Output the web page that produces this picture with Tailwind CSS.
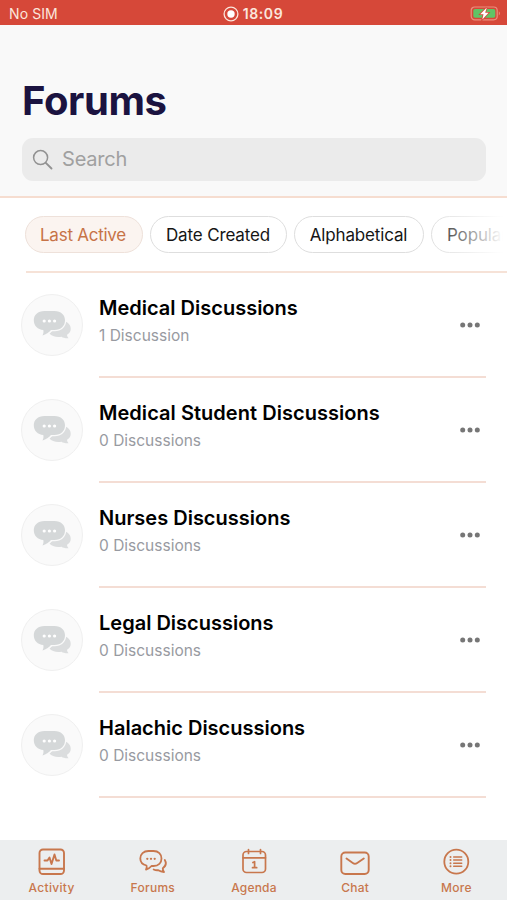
<!DOCTYPE html>
<html lang="en">
<head>
<meta charset="utf-8">
<title>Forums</title>
<script src="https://cdn.jsdelivr.net/npm/@tailwindcss/browser@4"></script>
</head>
<body class="w-[507px] h-[900px] overflow-hidden bg-white font-['Inter','Liberation_Sans',sans-serif] flex flex-col">
<svg class="hidden">
  <symbol id="bubbles" viewBox="0 0 38 30">
    <path d="M31 11C36 12.500 38.500 16 37.500 20.500C37 22.500 35.500 24 34 24.800C34 26 34.500 27 35.500 28.200C32 28.300 30 27.700 28.500 26.700C24 27.500 18.500 26.500 16.500 23.500Z" fill="#dbddde"/>
    <path d="M11.500 1H21.500C28 1 32 5 32 10.300C32 16 28 20 21.500 20H18C16 22.500 13 24.500 9.500 25.500C10.500 23.500 10.700 22 10.300 20C4.800 19.500 .8 16 .8 10.300C.8 5 4.800 1 11.500 1Z" fill="#d5d8d9" stroke="#fafafa" stroke-width="2.400" paint-order="stroke"/>
    <path d="M11.200 11h.01M16.400 11h.01M21.600 11h.01" stroke="#fff" stroke-width="3.200" stroke-linecap="round"/>
  </symbol>
  <symbol id="dots" viewBox="0 0 20 6"><circle cx="2.700" cy="3" r="2.500"/><circle cx="10" cy="3" r="2.500"/><circle cx="17.300" cy="3" r="2.500"/></symbol>
</svg>

<div class="h-[25px] shrink-0 bg-[#d64839] text-[#fbe6dc] grid grid-cols-3 items-center pt-[2px]">
  <span class="pl-[9px] text-[14px] leading-none tracking-[0.1px]">No SIM</span>
  <span class="flex items-center justify-center gap-[4px] text-[14px] font-semibold leading-none tracking-[0.600px] -ml-[1px]">
    <svg class="size-[16px]" viewBox="0 0 16 16"><circle cx="8" cy="8" r="6.900" fill="none" stroke="currentColor" stroke-width="1.300"/><circle cx="8" cy="8" r="3.700" fill="#fff"/></svg>18:09</span>
  <svg class="w-[31px] h-[15px] justify-self-end mr-[6px]" viewBox="0 0 31 15"><rect x="1.200" y="1" width="26" height="12.800" rx="3.500" fill="none" stroke="#e98f7f" stroke-width="1.200"/><rect x="3.300" y="3" width="22" height="8.800" rx="1.800" fill="#5fc466"/><path d="M28.800 5.300Q31 7.400 28.800 9.500" fill="#e98f7f"/><path d="M16.800 1.500L10.200 8.300H13.500L12.300 13.500L18.600 6.700H15.200Z" fill="#fff" stroke="#d64839" stroke-width="1.600" paint-order="stroke"/></svg>
</div>

<header class="h-[173px] shrink-0 bg-[#f9f9f9] border-b-2 border-[#f6ddd0] pl-[22px] pr-[21px] pt-[54px]">
  <h1 class="text-[40px] leading-[44px] font-bold text-[#1b1340] tracking-[-0.400px]">Forums</h1>
  <div class="mt-[15px] h-[43px] rounded-[11px] bg-[#ebebeb] flex items-center pl-[10px] gap-[9px] text-[#a0a0a0]">
    <svg class="size-[21px]" viewBox="0 0 21 21" fill="none" stroke="#929292" stroke-width="1.500" stroke-linecap="round"><circle cx="8.600" cy="8.600" r="7"/><path d="M13.800 13.800L19.500 19.500" stroke-width="1.900"/></svg>
    <span class="text-[20px] leading-none tracking-[-0.200px] -mt-[2px]">Search</span>
  </div>
</header>

<nav class="h-[75px] shrink-0 pl-[25px] relative overflow-hidden">
  <div class="pt-[18px] flex gap-[7px] text-[17px] tracking-[-0.150px] text-[#151515] whitespace-nowrap">
    <span class="w-[118px] h-[37px] pt-[2px] pr-[2px] shrink-0 rounded-full border border-[#eee1da] bg-[#fbf4f0] text-[#c77347] tracking-[-0.250px] flex items-center justify-center">Last Active</span>
    <span class="w-[137px] h-[37px] pt-[2px] pr-[1px] shrink-0 rounded-full border border-[#dedede] flex items-center justify-center">Date Created</span>
    <span class="w-[130px] h-[37px] pt-[2px] pr-[1px] shrink-0 rounded-full border border-[#dedede] flex items-center justify-center">Alphabetical</span>
    <span class="w-[92px] h-[37px] pt-[2px] shrink-0 rounded-full border border-[#dedede] flex items-center pl-[15px]">Popular</span>
  </div>
  <div class="absolute right-0 top-[16px] w-[82px] h-[42px] bg-linear-to-r from-white/0 via-white/50 to-white to-95%"></div>
  <div class="mt-[18px] h-[2px] ml-[1px] bg-[#f6e2d7]"></div>
</nav>

<main class="grow pl-[21px] pr-[21px]">
  <section class="h-[105px] flex items-start">
    <div class="mt-[21px] size-[62px] shrink-0 rounded-full border border-[#f0f0f0] bg-[#fafafa] flex items-center justify-center"><svg class="w-[38px] h-[30px]"><use href="#bubbles"/></svg></div>
    <div class="ml-[16px] h-full grow border-b-2 border-[#f4ddd4] flex justify-between">
      <div class="pt-[22px]"><h2 class="text-[20px] leading-[26px] font-semibold text-black">Medical Discussions</h2><p class="mt-[6px] text-[15.500px] leading-[18px] text-[#989aa1]">1 Discussion</p></div>
      <svg class="w-[20px] h-[6px] mt-[49px] mr-[6px]" fill="#767676"><use href="#dots"/></svg>
    </div>
  </section>
  <section class="h-[105px] flex items-start">
    <div class="mt-[21px] size-[62px] shrink-0 rounded-full border border-[#f0f0f0] bg-[#fafafa] flex items-center justify-center"><svg class="w-[38px] h-[30px]"><use href="#bubbles"/></svg></div>
    <div class="ml-[16px] h-full grow border-b-2 border-[#f4ddd4] flex justify-between">
      <div class="pt-[22px]"><h2 class="text-[20px] leading-[26px] font-semibold text-black tracking-[0.040px]">Medical Student Discussions</h2><p class="mt-[6px] text-[15.500px] leading-[18px] text-[#989aa1]">0 Discussions</p></div>
      <svg class="w-[20px] h-[6px] mt-[49px] mr-[6px]" fill="#767676"><use href="#dots"/></svg>
    </div>
  </section>
  <section class="h-[105px] flex items-start">
    <div class="mt-[21px] size-[62px] shrink-0 rounded-full border border-[#f0f0f0] bg-[#fafafa] flex items-center justify-center"><svg class="w-[38px] h-[30px]"><use href="#bubbles"/></svg></div>
    <div class="ml-[16px] h-full grow border-b-2 border-[#f4ddd4] flex justify-between">
      <div class="pt-[22px]"><h2 class="text-[20px] leading-[26px] font-semibold text-black">Nurses Discussions</h2><p class="mt-[6px] text-[15.500px] leading-[18px] text-[#989aa1]">0 Discussions</p></div>
      <svg class="w-[20px] h-[6px] mt-[49px] mr-[6px]" fill="#767676"><use href="#dots"/></svg>
    </div>
  </section>
  <section class="h-[105px] flex items-start">
    <div class="mt-[21px] size-[62px] shrink-0 rounded-full border border-[#f0f0f0] bg-[#fafafa] flex items-center justify-center"><svg class="w-[38px] h-[30px]"><use href="#bubbles"/></svg></div>
    <div class="ml-[16px] h-full grow border-b-2 border-[#f4ddd4] flex justify-between">
      <div class="pt-[22px]"><h2 class="text-[20px] leading-[26px] font-semibold text-black">Legal Discussions</h2><p class="mt-[6px] text-[15.500px] leading-[18px] text-[#989aa1]">0 Discussions</p></div>
      <svg class="w-[20px] h-[6px] mt-[49px] mr-[6px]" fill="#767676"><use href="#dots"/></svg>
    </div>
  </section>
  <section class="h-[105px] flex items-start">
    <div class="mt-[21px] size-[62px] shrink-0 rounded-full border border-[#f0f0f0] bg-[#fafafa] flex items-center justify-center"><svg class="w-[38px] h-[30px]"><use href="#bubbles"/></svg></div>
    <div class="ml-[16px] h-full grow border-b-2 border-[#f4ddd4] flex justify-between">
      <div class="pt-[22px]"><h2 class="text-[20px] leading-[26px] font-semibold text-black">Halachic Discussions</h2><p class="mt-[6px] text-[15.500px] leading-[18px] text-[#989aa1]">0 Discussions</p></div>
      <svg class="w-[20px] h-[6px] mt-[49px] mr-[6px]" fill="#767676"><use href="#dots"/></svg>
    </div>
  </section>
</main>

<footer class="h-[60px] shrink-0 bg-[#eceeef] grid grid-cols-5 pl-[1px] text-[#c8774d] text-[12px] font-medium text-center">
  <div class="flex flex-col items-center pt-[7px] gap-[3px]">
    <svg class="size-[30px]" viewBox="0 0 30 30" fill="none" stroke="currentColor" stroke-width="1.900" stroke-linecap="round" stroke-linejoin="round"><rect x="2.500" y="2.500" width="24.500" height="24.500" rx="3.500"/><path d="M2.500 21.800H27M7.500 13.500H10.500L12.500 10.500L14.500 17L17.500 7.500L19.300 13.500H22"/></svg>
    <span class="leading-[14px] pt-[1px] tracking-[0.3px]">Activity</span>
  </div>
  <div class="flex flex-col items-center pt-[7px] gap-[3px]">
    <svg class="size-[30px]" viewBox="0 0 30 30" fill="none" stroke="currentColor" stroke-width="1.800" stroke-linecap="round" stroke-linejoin="round"><path d="M10.500 4H15.500C20.500 4 23.500 7.300 23.500 11.500C23.500 15.800 20.500 19 15.500 19H13.500C12 20.800 10.500 21.800 8 22.600C8.800 21 9 19.800 8.500 18.500C4.500 17.500 2.300 15 2.300 11.500C2.300 7.300 5.500 4 10.500 4Z"/><path d="M26.800 13C28.500 16 28 19 24.800 21.200C24.700 22.700 25.100 23.800 26 25C23.500 24.800 22 24.300 20.300 23.200C18.500 23.400 17 23.100 15.700 22.500"/><path d="M9.300 11.800h.01M13 11.800h.01M16.700 11.800h.01" stroke-width="2.300"/></svg>
    <span class="leading-[14px] pt-[1px] tracking-[0.3px]">Forums</span>
  </div>
  <div class="flex flex-col items-center pt-[7px] gap-[3px]">
    <svg class="size-[30px]" viewBox="0 0 30 30" fill="none" stroke="currentColor" stroke-width="1.700" stroke-linecap="round" stroke-linejoin="round"><rect x="4" y="4.500" width="22.500" height="21" rx="3.500"/><path d="M4 10.800H26.500M9.500 2.500V6.500M21.500 2.500V6.500"/><path d="M13.900 15.500L15.600 14.700V20.500M13.500 20.700H17.700" stroke-width="1.700"/></svg>
    <span class="leading-[14px] pt-[1px] tracking-[0.2px]">Agenda</span>
  </div>
  <div class="flex flex-col items-center pt-[7px] gap-[3px]">
    <svg class="size-[30px]" viewBox="0 0 30 30" fill="none" stroke="currentColor" stroke-width="1.900" stroke-linecap="round" stroke-linejoin="round"><rect x="1.300" y="5.500" width="27.400" height="21.500" rx="4"/><path d="M6.500 11.500L12.800 16Q15 17.500 17.200 16L23.800 11.500"/></svg>
    <span class="leading-[14px] pt-[1px] tracking-[0.3px]">Chat</span>
  </div>
  <div class="flex flex-col items-center pt-[7px] gap-[3px]">
    <svg class="size-[30px]" viewBox="0 0 30 30" fill="none" stroke="currentColor" stroke-width="1.800" stroke-linecap="round"><circle cx="15.300" cy="14.700" r="12"/><path d="M12.700 10H20.700M12.700 13H20.700M12.700 16.200H20.700M12.700 19.300H20.700" stroke-width="1.500"/><path d="M9.500 10h.01M9.500 13h.01M9.500 16.200h.01M9.500 19.300h.01" stroke-width="2"/></svg>
    <span class="leading-[14px] pt-[1px] tracking-[0.3px]">More</span>
  </div>
</footer>
</body>
</html>
